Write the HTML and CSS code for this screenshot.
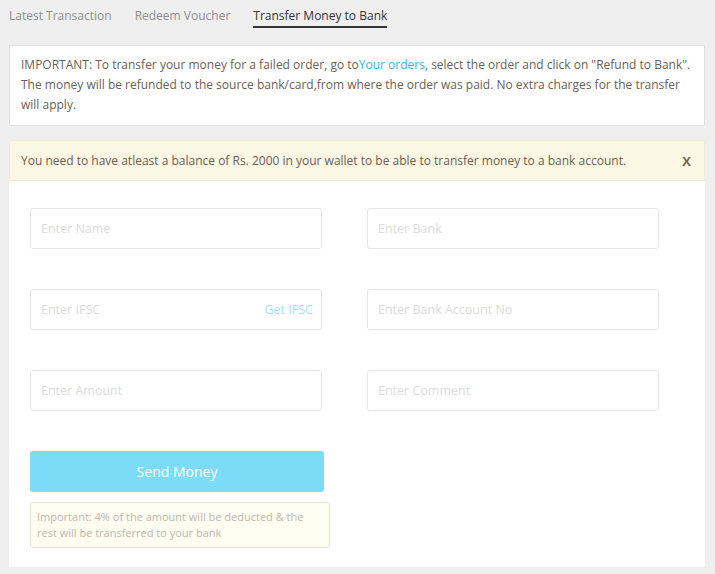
FILE: index.html
```html
<!DOCTYPE html>
<html lang="en">
<head>
    <meta charset="UTF-8">
    <meta name="viewport" content="width=device-width, initial-scale=1.0">
    <title>Wallet</title>
    <link rel="stylesheet" href="styles.css">
</head>
<body>
    <div class="tabs">
        <a class="tab">Latest Transaction</a>
        <a class="tab">Redeem Voucher</a>
        <a class="tab active">Transfer Money to Bank</a>
    </div>

    <div class="info">
        IMPORTANT: To transfer your money for a failed order, go to<a class="link">Your orders</a>, select the order and click on "Refund to Bank". The money will be refunded to the source bank/card,from where the order was paid. No extra charges for the transfer will apply.
    </div>

    <div class="alert">
        <span>You need to have atleast a balance of Rs. 2000 in your wallet to be able to transfer money to a bank account.</span>
        <span class="close">X</span>
    </div>

    <div class="panel">
        <div class="grid">
            <input type="text" placeholder="Enter Name">
            <input type="text" placeholder="Enter Bank">
            <div class="field">
                <input type="text" placeholder="Enter IFSC">
                <a class="get">Get IFSC</a>
            </div>
            <input type="text" placeholder="Enter Bank Account No">
            <input type="text" placeholder="Enter Amount">
            <input type="text" placeholder="Enter Comment">
        </div>
        <button class="send">Send Money</button>
        <div class="note">Important: 4% of the amount will be deducted &amp; the rest will be transferred to your bank</div>
    </div>
</body>
</html>
```

FILE: styles.css
```css
*{
    margin: 0;
    padding: 0;
    box-sizing: border-box;
}
body{
    background-color: #efefef;
    font-family: "Open Sans", "Liberation Sans", sans-serif;
    font-size: 12px;
    color: #6b5f55;
}
.tabs{
    display: flex;
    padding: 7px 9px 0;
    height: 31px;
}
.tab{
    margin-right: 23px;
    color: #8e8e8e;
    font-size: 12px;
    height: 21px;
    line-height: 17px;
}
.tab.active{
    color: #333;
    border-bottom: 2px solid #333;
}
.info{
    margin: 14px 10px 0 9px;
    padding: 9px 10px 10px 11px;
    background-color: #fff;
    border: 1px solid #e2e2e2;
    line-height: 20px;
    font-size: 12px;
}
.link{
    color: #2cb6e4;
}
.alert{
    display: flex;
    justify-content: space-between;
    align-items: center;
    margin: 14px 10px 0 9px;
    height: 41px;
    padding: 0 13px 0 11px;
    background-color: #fcf6e4;
    border: 1px solid #f4ecd2;
    font-size: 12px;
}
.close{
    color: #7a6a4e;
    font-weight: bold;
    font-size: 13px;
}
.panel{
    margin: 0 10px 0 9px;
    padding: 27px 21px 19px;
    background-color: #fff;
}
.grid{
    display: grid;
    grid-template-columns: 292px 292px;
    column-gap: 45px;
    row-gap: 40px;
}
.grid input{
    width: 292px;
    height: 41px;
    padding: 0 10px;
    border: 1px solid #e6e6e6;
    border-radius: 3px;
    font-family: inherit;
    font-size: 12.5px;
    outline: none;
}
.grid input::placeholder{
    color: #dcdcdc;
}
.field{
    position: relative;
}
.get{
    position: absolute;
    right: 9px;
    top: 12px;
    color: #a5e2f4;
    font-size: 12.5px;
}
.send{
    display: block;
    margin-top: 40px;
    width: 294px;
    height: 41px;
    border: none;
    border-radius: 3px;
    background-color: #7cdcf7;
    color: #fff;
    font-family: inherit;
    font-size: 14px;
}
.note{
    margin-top: 10px;
    width: 300px;
    padding: 6px;
    background-color: #fdfdf1;
    border: 1px solid #e9e5cf;
    border-radius: 3px;
    color: #bdb8b0;
    font-size: 11px;
    line-height: 16px;
}
```
